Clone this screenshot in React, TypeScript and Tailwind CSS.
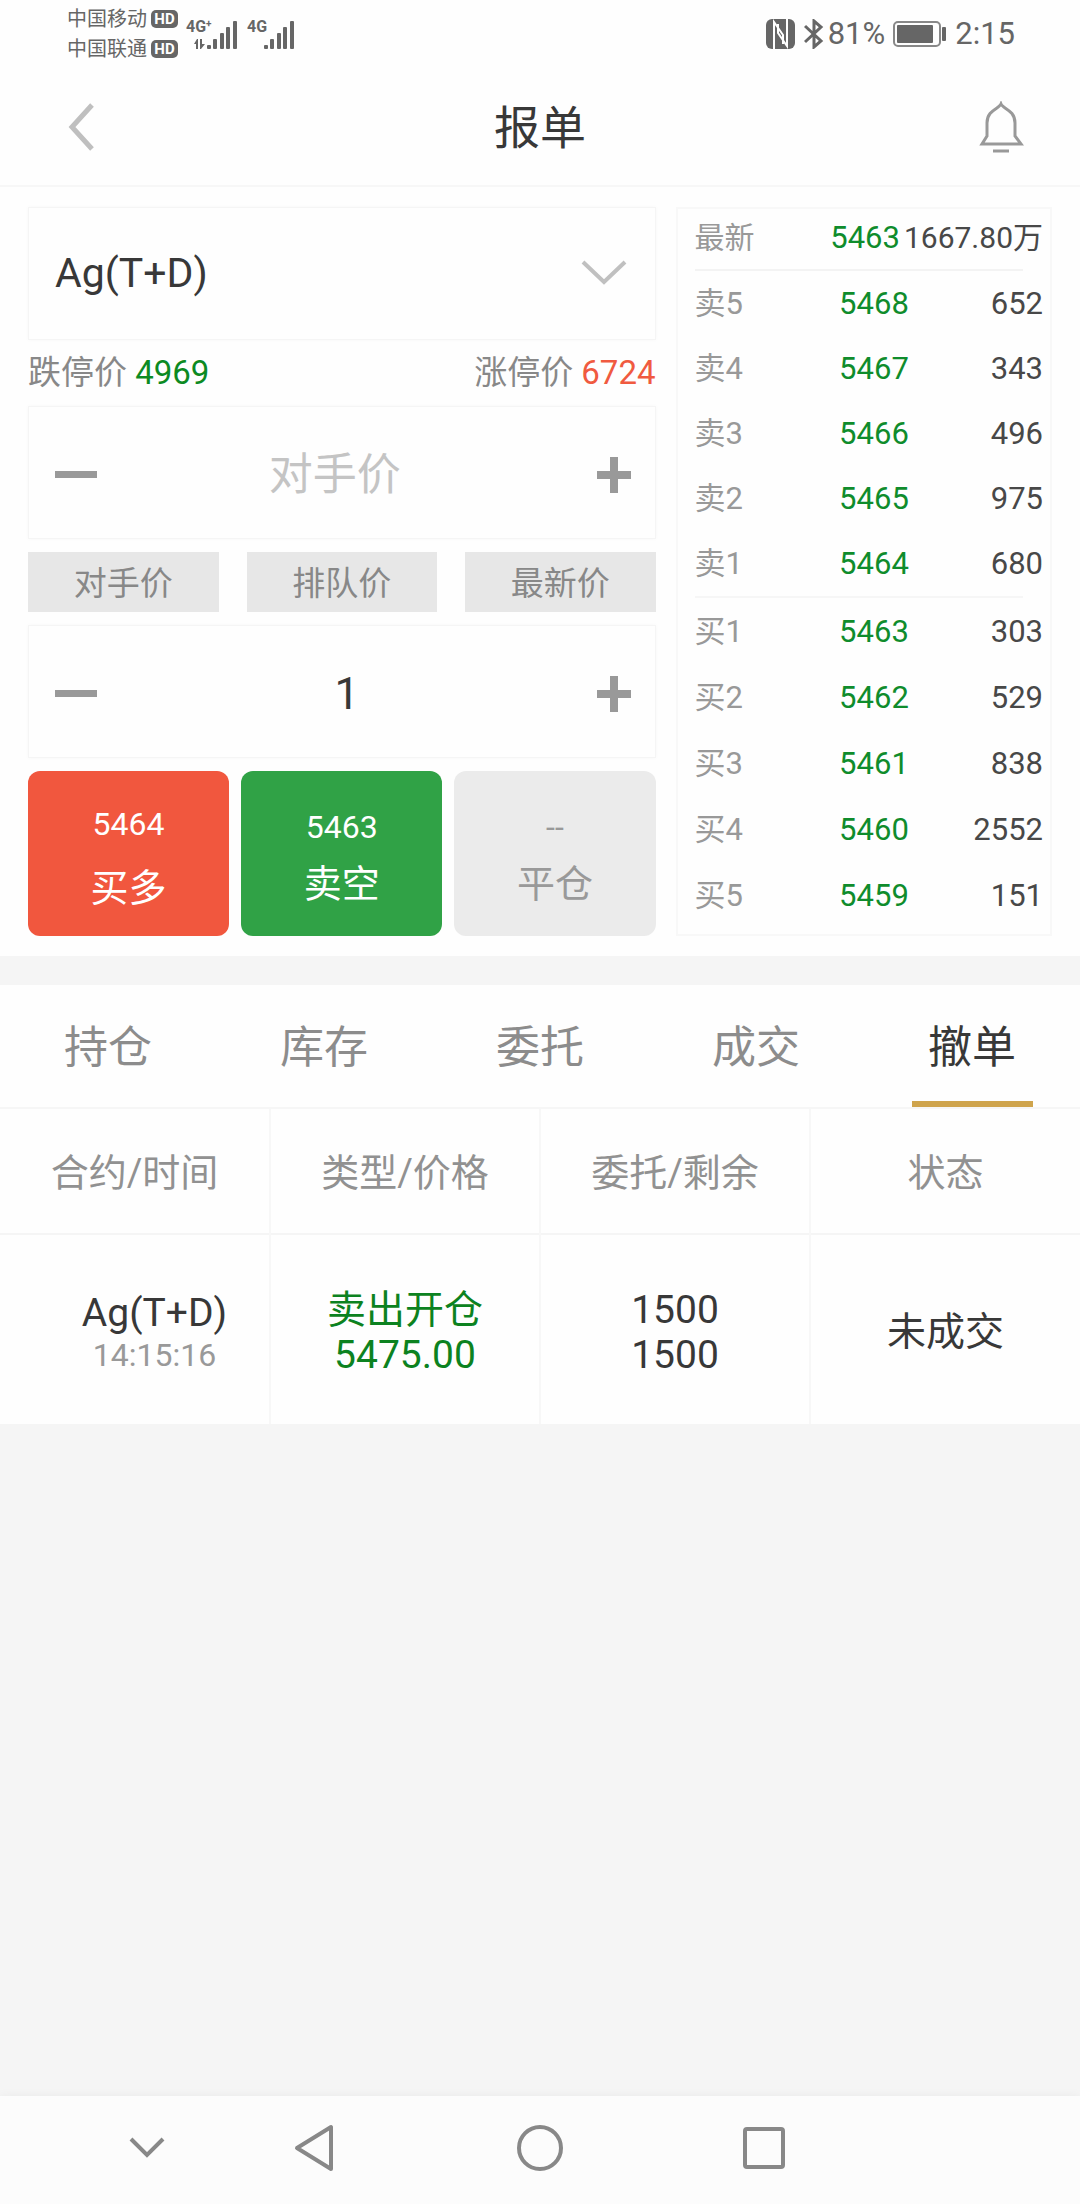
import React from "react";

const asks = [
  ["卖5", "5468", "652"],
  ["卖4", "5467", "343"],
  ["卖3", "5466", "496"],
  ["卖2", "5465", "975"],
  ["卖1", "5464", "680"],
];

const bids = [
  ["买1", "5463", "303"],
  ["买2", "5462", "529"],
  ["买3", "5461", "838"],
  ["买4", "5460", "2552"],
  ["买5", "5459", "151"],
];

const tabs = ["持仓", "库存", "委托", "成交", "撤单"];

const card = "border border-[#f5f5f5] bg-[#fefefe] shadow-[0_0_4px_rgba(0,0,0,0.03)]";

function HdBadge() {
  return (
    <span className="flex h-[18px] w-[27px] items-center justify-center rounded-[5px] bg-[#666] text-[15px] leading-none font-bold text-white">
      HD
    </span>
  );
}

function Signal() {
  return (
    <svg width="31" height="28" viewBox="0 0 31 28" fill="#666" aria-hidden="true">
      <rect x="0" y="24" width="4" height="4" rx="1" />
      <rect x="6" y="18" width="4" height="10" rx="1" />
      <rect x="13" y="12" width="4" height="16" rx="1" />
      <rect x="19" y="6" width="4" height="22" rx="1" />
      <rect x="26" y="0" width="4" height="28" rx="1" />
    </svg>
  );
}

function StatusBar() {
  return (
    <div className="flex h-[68px] items-center justify-between pr-[65px] pl-[67px] text-[#666]">
      <div className="flex items-center">
        <div className="flex flex-col text-[20px] leading-[30px]">
          <div className="flex items-center gap-1">
            中国移动 <HdBadge />
          </div>
          <div className="flex items-center gap-1">
            中国联通 <HdBadge />
          </div>
        </div>
        <div className="ml-2 flex items-end">
          <div className="flex h-[30px] w-[21px] flex-col justify-between">
            <span className="text-[16px] leading-[16px] font-bold whitespace-nowrap">
              4G<sup className="text-[10px]">+</sup>
            </span>
            <svg className="ml-2" width="11" height="10" viewBox="0 0 11 10" fill="#666" aria-hidden="true">
              <path d="M0 5 3 0h1v10H2V5zM6 0h2v5h3L7 10H6z" />
            </svg>
          </div>
          <Signal />
        </div>
        <div className="ml-[9px] flex items-end">
          <span className="h-[30px] w-[17px] text-[16px] leading-[16px] font-bold">4G</span>
          <Signal />
        </div>
      </div>
      <div className="flex items-center text-[31px]">
        <svg width="29" height="30" viewBox="0 0 29 30" aria-hidden="true">
          <rect width="29" height="30" rx="6" fill="#666" />
          <path d="M8 30V3l9 13v9M21 0v27l-9-13V5" fill="none" stroke="#fff" strokeWidth="2" />
        </svg>
        <svg className="ml-[9px]" width="20" height="30" viewBox="0 0 20 30" fill="none" stroke="#666" strokeWidth="3" aria-hidden="true">
          <path d="M1 7l16 15-7 6V2l7 6L1 23" />
        </svg>
        <span className="ml-1">81%</span>
        <svg className="ml-2" width="54" height="26" viewBox="0 0 54 26" aria-hidden="true">
          <rect x="1" y="1" width="46" height="24" rx="4" fill="none" stroke="#888" strokeWidth="2" />
          <rect x="4" y="4" width="36" height="18" rx="1" fill="#666" />
          <rect x="49" y="6" width="4" height="14" rx="1" fill="#666" />
        </svg>
        <span className="ml-2">2:15</span>
      </div>
    </div>
  );
}

function Header() {
  return (
    <header className="flex h-[119px] items-center justify-between border-b-2 border-[#f7f7f7] pr-[55px] pl-[66px]">
      <button aria-label="返回" className="w-[37px]">
        <svg width="30" height="48" viewBox="0 0 30 48" fill="none" stroke="#bfbfbf" strokeWidth="5" aria-hidden="true">
          <path d="M26 2 6 24l20 22" />
        </svg>
      </button>
      <h1 className="pt-1 text-[46px] text-[#383838]">报单</h1>
      <button aria-label="通知">
        <svg width="48" height="52" viewBox="0 0 48 52" fill="none" stroke="#999" strokeWidth="3" aria-hidden="true">
          <path d="M24 3c-2 5-14 6-14 19v13l-5 8h39l-6-8V22C38 9 26 8 24 3zM16 50h16" />
        </svg>
      </button>
    </header>
  );
}

function Stepper({ label, ...input }: { label: string } & React.InputHTMLAttributes<HTMLInputElement>) {
  return (
    <div className={`${card} flex h-[133px] items-center pt-1 pr-6 pl-[26px]`}>
      <button type="button" aria-label={`减少${label}`}>
        <svg width="42" height="36" viewBox="0 0 42 36" fill="#999" aria-hidden="true">
          <path d="M0 14h42v7H0z" />
        </svg>
      </button>
      <input
        {...input}
        aria-label={label}
        className="w-0 flex-1 bg-transparent text-center text-[44px] text-[#383838] outline-none placeholder:text-[#c4c4c4] placeholder-shown:pr-6"
      />
      <button type="button" aria-label={`增加${label}`}>
        <svg width="34" height="36" viewBox="0 0 34 36" fill="#999" aria-hidden="true">
          <path d="M13 0h8v14h13v8H21v14h-8V22H0v-8h13z" />
        </svg>
      </button>
    </div>
  );
}

function OrderForm() {
  return (
    <form className="flex min-w-0 flex-col">
      <div className={`${card} relative h-[133px]`}>
        <select aria-label="合约" className="h-full w-full appearance-none bg-transparent pl-[26px] text-[41px] text-[#383838] outline-none">
          <option>Ag(T+D)</option>
        </select>
        <svg className="pointer-events-none absolute top-[52px] right-7" width="46" height="26" viewBox="0 0 46 26" fill="none" stroke="#c0c0c0" strokeWidth="4" aria-hidden="true">
          <path d="M2 2l21 20L44 2" />
        </svg>
      </div>
      <div className="flex h-[66px] items-center justify-between text-[33px] text-[#888]">
        <span>
          跌停价 <span className="text-[#0c8a22]">4969</span>
        </span>
        <span>
          涨停价 <span className="text-[#f05a40]">6724</span>
        </span>
      </div>
      <Stepper label="价格" placeholder="对手价" />
      <div className="my-[13px] grid grid-cols-3 gap-7">
        {["对手价", "排队价", "最新价"].map((name) => (
          <button key={name} type="button" className="h-[60px] bg-[#e7e7e7] pt-1 text-[33px] text-[#888]">
            {name}
          </button>
        ))}
      </div>
      <Stepper label="数量" defaultValue="1" />
      <div className="mt-[13px] grid grid-cols-3 gap-3 text-[38px]">
        <button type="button" className="flex h-[165px] flex-col items-center justify-center rounded-xl bg-[#f1573e] pt-1 leading-[64px] text-white">
          <span className="text-[32px]">5464</span>
          <span>买多</span>
        </button>
        <button type="button" className="flex h-[165px] flex-col items-center justify-center rounded-xl bg-[#30a246] pt-1 leading-[57px] text-white">
          <span className="text-[32px]">5463</span>
          <span>卖空</span>
        </button>
        <button type="button" className="flex h-[165px] flex-col items-center justify-center rounded-xl bg-[#ebebeb] pt-1 leading-[57px] text-[#999]">
          <span className="text-[32px]">--</span>
          <span>平仓</span>
        </button>
      </div>
    </form>
  );
}

function Levels({ rows, label, rowClass }: { rows: string[][]; label: string; rowClass: string }) {
  return (
    <table aria-label={label} className="w-full table-fixed">
      <tbody>
        {rows.map(([name, price, volume]) => (
          <tr key={name} className={rowClass}>
            <th scope="row" className="w-[35%] text-left font-normal text-[#999]">{name}</th>
            <td className="w-[33%] text-center text-[#0f8c2c]">{price}</td>
            <td className="text-right">{volume}</td>
          </tr>
        ))}
      </tbody>
    </table>
  );
}

function OrderBook() {
  return (
    <section aria-label="盘口" className="min-w-0 border-2 border-[#f8f8f8] pr-[7px] pl-[17px] text-[30px] leading-[45px] text-[#484848]">
      <div className="flex h-[60px] items-center gap-1 pb-1">
        <span className="flex-1 whitespace-nowrap text-[#999]">最新</span>
        <span className="text-[31px] text-[#0f8c2c]">5463</span>
        <span className="whitespace-nowrap">1667.80万</span>
      </div>
      <hr className="mr-5 border-t-2 border-[#f3f3f3]" />
      <div className="text-[31px]">
        <Levels rows={asks} label="卖盘" rowClass="h-[65px]" />
        <hr className="mr-5 border-t-2 border-[#f6f6f6]" />
        <Levels rows={bids} label="买盘" rowClass="h-[66px]" />
      </div>
    </section>
  );
}

function Tabs() {
  return (
    <div role="tablist" className="grid h-[124px] grid-cols-5 border-b-2 border-[#f6f6f6] text-[44px]">
      {tabs.map((tab) => (
        <button
          key={tab}
          role="tab"
          aria-selected={tab === "撤单"}
          className="flex flex-col items-center text-[#8c8c8c] aria-selected:text-[#383838]"
        >
          <span className="flex flex-1 items-center pt-[10px]">{tab}</span>
          <span className={tab === "撤单" ? "h-[6px] w-[121px] bg-[#cfa44c]" : "h-[6px]"} />
        </button>
      ))}
    </div>
  );
}

function Orders() {
  return (
    <table className="w-full table-fixed text-center text-[39px] leading-[45px] text-[#383838]">
      <thead>
        <tr className="h-[125px] border-b-2 border-[#f5f5f5] text-[38px] text-[#919191]">
          {["合约/时间", "类型/价格", "委托/剩余", "状态"].map((name) => (
            <th key={name} scope="col" className="border-r-2 border-[#f7f7f7] pt-1 font-normal last:border-r-0">
              {name}
            </th>
          ))}
        </tr>
      </thead>
      <tbody>
        <tr className="h-[190px]">
          <td className="border-r-2 border-[#f7f7f7] pt-[6px] pl-10">
            <div>Ag(T+D)</div>
            <div className="text-[32px] leading-[38px] text-[#999]">14:15:16</div>
          </td>
          <td className="border-r-2 border-[#f7f7f7] pt-[6px] text-[#0c8220]">
            <div>卖出开仓</div>
            <div>5475.00</div>
          </td>
          <td className="border-r-2 border-[#f7f7f7] pt-[6px]">
            <div>1500</div>
            <div>1500</div>
          </td>
          <td className="pt-[6px]">未成交</td>
        </tr>
      </tbody>
    </table>
  );
}

function NavBar() {
  return (
    <nav className="grid h-[108px] grid-cols-[64fr_166fr_168fr_284fr_164fr_234fr] items-center justify-items-center bg-[#fcfcfc] pb-1 shadow-[0_0_10px_rgba(0,0,0,0.05)]">
      <button aria-label="收起" className="col-start-2">
        <svg width="36" height="22" viewBox="0 0 36 22" fill="none" stroke="#888" strokeWidth="4" aria-hidden="true">
          <path d="M2 2l16 16L34 2" />
        </svg>
      </button>
      <button aria-label="后退">
        <svg width="42" height="48" viewBox="0 0 42 48" fill="none" stroke="#888" strokeWidth="4" strokeLinejoin="round" aria-hidden="true">
          <path d="M38 3v42L4 24z" />
        </svg>
      </button>
      <button aria-label="主页">
        <svg width="46" height="46" viewBox="0 0 46 46" fill="none" stroke="#888" strokeWidth="4" aria-hidden="true">
          <circle cx="23" cy="23" r="21" />
        </svg>
      </button>
      <button aria-label="最近任务">
        <svg width="42" height="42" viewBox="0 0 42 42" fill="none" stroke="#888" strokeWidth="4" aria-hidden="true">
          <rect x="2" y="2" width="38" height="38" rx="2" />
        </svg>
      </button>
    </nav>
  );
}

export default function App() {
  return (
    <div className="flex min-h-screen flex-col bg-[#f5f5f5] font-[Roboto,'Noto_Sans_CJK_SC',sans-serif]">
      <div className="bg-[#fefefe]">
        <StatusBar />
        <Header />
        <div className="grid grid-cols-[5fr_3fr] gap-5 px-7 pt-5 pb-5">
          <OrderForm />
          <OrderBook />
        </div>
      </div>
      <main className="mt-[29px] flex-1">
        <div className="bg-[#fefefe]">
          <Tabs />
          <Orders />
        </div>
      </main>
      <NavBar />
    </div>
  );
}
